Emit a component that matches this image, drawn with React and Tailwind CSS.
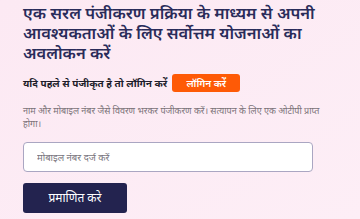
import React from 'react';

export default function App() {
  return (
    <div className="w-[360px] h-[219px] overflow-hidden bg-gradient-to-br from-[#fce9f3] to-[#fdeef6] px-[23px] pt-[3px]" style={{ fontFamily: '"Noto Sans", "Noto Sans Devanagari", sans-serif' }}>
      <h1 className="text-[16.5px] leading-[20px] font-semibold text-[#2a2c5a]">
        एक सरल पंजीकरण प्रक्रिया के माध्यम से अपनी आवश्यकताओं के लिए सर्वोत्तम योजनाओं का अवलोकन करें
      </h1>

      <div className="mt-[11px] flex items-center gap-[5px]">
        <span className="text-[10px] font-bold text-[#1d1d2b]">यदि पहले से पंजीकृत है तो लॉगिन करें</span>
        <button className="h-[18px] w-[68px] rounded-[3px] bg-[#fe5a06] text-[10px] font-semibold leading-none text-white">
          लॉगिन करें
        </button>
      </div>

      <p className="mt-[12px] text-[9px] leading-[13px] text-[#7a7278]">
        नाम और मोबाइल नंबर जैसे विवरण भरकर पंजीकरण करें। सत्यापन के लिए एक ओटीपी प्राप्त होगा।
      </p>

      <input
        type="text"
        placeholder="मोबाइल नंबर दर्ज करें"
        className="mt-[12px] block h-[30px] w-[290px] rounded-[4px] border border-[#aaa6c2] bg-white px-[13px] text-[9.5px] placeholder:text-[#77737c] outline-none"
      />

      <button className="mt-[11px] block h-[30px] w-[104px] rounded-[3px] bg-[#23234f] text-[12px] text-white">
        प्रमाणित करे
      </button>
    </div>
  );
}
